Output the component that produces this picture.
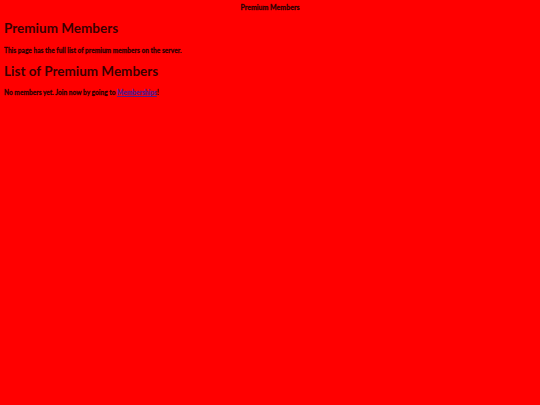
export default function App() {
  return (
    <div className="min-h-[405px] w-[540px] bg-[#ff0000] text-black/80" style={{ fontFamily: "Lato, 'Open Sans', sans-serif" }}>
      <div className="pt-[3px] text-center text-[7px] font-bold leading-[8px] [-webkit-text-stroke:0.3px_rgba(0,0,0,0.8)]">Premium Members</div>
      <div className="px-[4px]">
        <h1 className="mt-[9px] text-[13.5px] leading-[17px] font-bold">Premium Members</h1>
        <p className="mt-[9px] text-[6.6px] font-bold leading-[8px] [-webkit-text-stroke:0.3px_rgba(0,0,0,0.8)]">This page has the full list of premium members on the server.</p>
        <h2 className="mt-[9px] text-[13.5px] leading-[17px] font-bold">List of Premium Members</h2>
        <p className="mt-[8px] text-[6.6px] font-bold leading-[8px] [-webkit-text-stroke:0.3px_rgba(0,0,0,0.8)]">
          No members yet. Join now by going to <a href="#" className="text-[#551a8b] underline [-webkit-text-stroke:0.3px_#551a8b]">Memberships</a>!
        </p>
      </div>
    </div>
  );
}
